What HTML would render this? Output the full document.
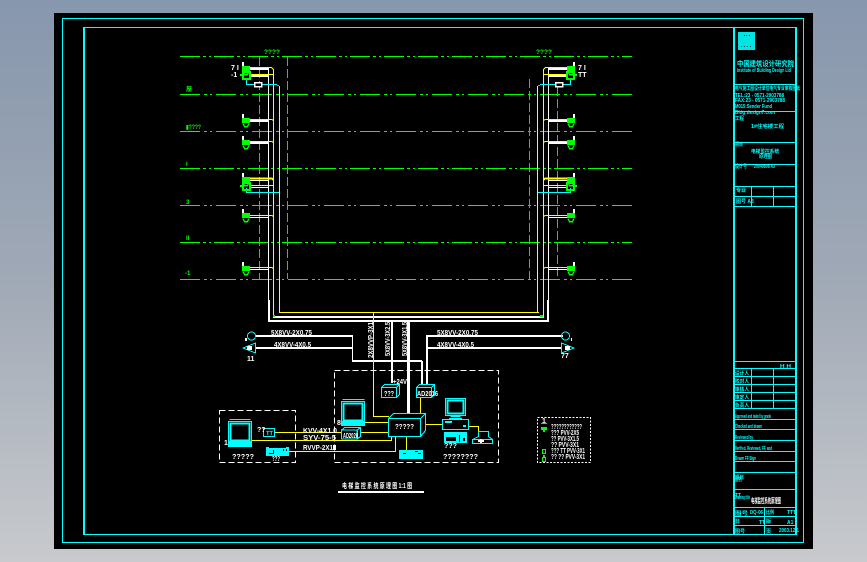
<!DOCTYPE html>
<html><head><meta charset="utf-8"><title>CAD drawing</title>
<style>
html,body{margin:0;padding:0;width:867px;height:562px;overflow:hidden;background:#a0a8b4}
svg{display:block;position:absolute;left:0;top:0}
text{font-family:"Liberation Sans","Noto Sans CJK SC",sans-serif;font-weight:700}
.w{fill:#fff;font-size:7px}
.g{fill:#00ff00;font-size:6px}
.c{fill:#00ffff;font-size:5px}
.c6{fill:#00ffff;font-size:7px}
</style></head><body>
<svg width="867" height="562" viewBox="0 0 867 562" xmlns="http://www.w3.org/2000/svg" shape-rendering="crispEdges">
<defs>
<linearGradient id="bg" x1="0" y1="0" x2="0" y2="1"><stop offset="0" stop-color="#8797ad"/><stop offset=".5" stop-color="#a0a9b6"/><stop offset="1" stop-color="#c8cacd"/></linearGradient>
<g id="fa">
<rect x="-4" y="-2" width="8" height="5" fill="#00ff00"/>
<path d="M-3 3.500L-1.500 6.500H1.500L3 3.500" fill="none" stroke="#00ff00" stroke-width="1.500"/>
<rect x="-4" y="-6" width="2" height="4" fill="#fff"/>
</g>
<g id="fb">
<rect x="-3" y="-3" width="7" height="7" fill="none" stroke="#00ff00" stroke-width="2"/>
<rect x="-6" y="-1" width="4" height="2" fill="#00ff00"/>
</g>
<g id="box3d"><path d="M.5 3.500H15.500V13.500H.5ZM.5 3.500L3.500 .5H18.500V10.500L15.500 13.500M15.500 3.500L18.500 .5" fill="#000" stroke="#0ff" stroke-width="1.200"/></g>
</defs>
<rect width="867" height="562" fill="url(#bg)"/>
<rect x="54" y="13" width="759" height="536" fill="#000"/>
<!-- frames -->
<g fill="none" stroke="#0ff">
<rect x="62.500" y="18.500" width="741" height="524"/>
<path d="M84 27.500H796M84 534.500H796"/>
</g>
<g fill="#0ff"><rect x="83" y="27" width="2" height="508"/><rect x="733" y="27" width="2" height="508"/><rect x="795" y="27" width="2" height="508"/></g>
<!-- green axis lines -->
<g stroke="#00ff00" fill="none">
<path d="M180 56.500H632M180 168.500H632M180 242.500H632" stroke-dasharray="20 3 3 3 2 3"/>
<path d="M180 94.500H632M180 131.500H632M180 205.500H632M180 279.500H632" stroke-dasharray="20 4 3 3 2 4"/>
</g>
<!-- grey dashed axes -->
<g stroke="#8a8a8a" fill="none" stroke-dasharray="9 3">
<path d="M259.500 57V279M287.500 57V279M529.500 79V279M557.500 87V279"/>
</g>
<text class="g" x="264" y="54" textLength="16" lengthAdjust="spacingAndGlyphs">????</text>
<text class="g" x="536" y="54" textLength="16" lengthAdjust="spacingAndGlyphs">????</text>
<text class="g" x="186" y="91" font-size="5">屋</text>
<text class="g" x="186" y="129" textLength="15" lengthAdjust="spacingAndGlyphs">▮????</text>
<text class="g" x="186" y="166">I</text>
<text class="g" x="186" y="204">3</text>
<text class="g" x="186" y="240">II</text>
<text class="g" x="185" y="275">-1</text>
<text class="w" x="231" y="70" font-size="6">7 I</text>
<text class="w" x="231" y="77" font-size="6">-1</text>
<text class="w" x="578" y="70" font-size="6">7 I</text>
<text class="w" x="578" y="77" font-size="6">TT</text>
<!-- left half, mirrored for right half -->
<g id="half">
<g fill="#fff">
<rect x="249" y="68" width="19" height="2"/><rect x="249" y="75" width="19" height="2"/>
<rect x="249" y="120" width="19" height="2"/><rect x="249" y="142" width="19" height="2"/>
<rect x="249" y="180" width="19" height="1"/><rect x="249" y="187" width="19" height="1"/>
<rect x="249" y="217" width="19" height="1"/><rect x="249" y="269" width="19" height="1"/>
<rect x="268" y="68" width="1" height="235"/><rect x="268" y="300" width="2" height="21"/>
<rect x="268" y="320" width="281" height="2"/>
<rect x="273" y="316" width="271" height="2"/>
</g>
<g fill="none" stroke="#ff0">
<path d="M249 67.500H271.500L273.500 69.500V316M249 74.500H273.500M249 119.500H272L273.500 120.500M249 141.500H272L273.500 142.500M249 215.500H272L273.500 216.500M249 267.500H272L273.500 268.500M249 185.500H273.500"/>
<path d="M279.500 86V312.500"/>
<path d="M249 178.500H272L273.500 180" stroke-width="2"/>
</g>
<path d="M246.500 78V84.500H277M246.500 188V192.500H279" fill="none" stroke="#0ff"/>
<rect x="277" y="85" width="2" height="1" fill="#00ff00"/>
<rect x="254.500" y="82.500" width="7" height="4" fill="#000" stroke="#fff" stroke-width="1.500"/>
<use href="#fa" x="246" y="68"/><use href="#fb" x="246" y="75"/>
<use href="#fa" x="246" y="120"/><use href="#fa" x="246" y="142"/>
<use href="#fa" x="246" y="179"/><use href="#fb" x="246" y="186"/>
<use href="#fa" x="246" y="215"/><use href="#fa" x="246" y="268"/>
</g>
<use href="#half" transform="translate(817 0) scale(-1 1)"/>
<rect x="279" y="312" width="260" height="1" fill="#ff0"/>
<rect x="273" y="315" width="2" height="2" fill="#00ff00"/><rect x="540" y="315" width="3" height="2" fill="#00ff00"/>
<!-- white buses -->
<g fill="#fff">
<rect x="255" y="335" width="98" height="2"/><rect x="255" y="347" width="98" height="2"/>
<rect x="352" y="336" width="1" height="26"/><rect x="352" y="360" width="70" height="2"/>
<rect x="421" y="361" width="2" height="25"/>
<rect x="426" y="335" width="2" height="51"/><rect x="427" y="335" width="136" height="2"/>
<rect x="428" y="347" width="135" height="2"/>
<rect x="391" y="322" width="2" height="61"/><rect x="407" y="322" width="3" height="91"/>
</g>
<text class="w" x="271" y="335" textLength="41" lengthAdjust="spacingAndGlyphs">5X8VV-2X0.75</text>
<text class="w" x="274" y="347" textLength="37" lengthAdjust="spacingAndGlyphs">4X8VV-4X0.5</text>
<text class="w" x="437" y="335" textLength="41" lengthAdjust="spacingAndGlyphs">5X8VV-2X0.75</text>
<text class="w" x="437" y="347" textLength="37" lengthAdjust="spacingAndGlyphs">4X8VV-4X0.5</text>
<text class="w" transform="translate(373 358) rotate(-90)" textLength="36" lengthAdjust="spacingAndGlyphs">2X8VVP-3X1</text>
<text class="w" transform="translate(390 356) rotate(-90)" textLength="34" lengthAdjust="spacingAndGlyphs">5X8VV-3X2.5</text>
<text class="w" transform="translate(407 356) rotate(-90)" textLength="34" lengthAdjust="spacingAndGlyphs">5X8VV-3X1.5</text>
<!-- speakers -->
<g fill="none" stroke="#0ff">
<circle cx="251.500" cy="336" r="4"/><path d="M255.500 343V353L243 348Z" fill="#000"/>
<circle cx="565.500" cy="336" r="4"/><path d="M561.500 343V353L574 348Z" fill="#000"/>
</g>
<g fill="#fff"><rect x="247" y="346" width="5" height="4"/><rect x="565" y="346" width="5" height="4"/><rect x="245" y="338" width="2" height="3"/><rect x="571" y="338" width="1" height="3"/></g>
<text class="w" x="247" y="361" font-size="6">11</text><text class="w" x="561" y="358" font-size="6">77</text>
<!-- dashed boxes -->
<g fill="none" stroke="#fff" stroke-dasharray="6 3">
<rect x="334.500" y="370.500" width="164" height="92"/>
<rect x="219.500" y="410.500" width="76" height="52"/>
</g>
<rect x="537.500" y="417.500" width="53" height="45" fill="none" stroke="#fff" stroke-dasharray="2 1.500"/>
<!-- yellow wiring -->
<g fill="none" stroke="#ff0">
<path d="M373.500 313V416.500H389M365 422.500H388M275 432.500H388M252 440.500H391.500V436M289 451.500H395.500V436M406.500 436V450M420.500 396V413M425 424.500H442M469 426.500H478.500V431"/>
</g>
<!-- left console -->
<g fill="none" stroke="#0ff">
<path d="M229.500 419.500H250.500"/><rect x="228.500" y="421.500" width="23" height="25"/><rect x="230.500" y="423.500" width="19" height="17" stroke-width="2"/>
<rect x="263.500" y="428.500" width="11" height="8" stroke-width="1.200"/>
</g>
<rect x="228" y="441" width="24" height="6" fill="#0ff"/>
<path d="M266 447H269V448H286V447H289V456H266Z" fill="#0ff"/>
<path d="M273 450H274V454H269V453H273ZM283 449H284V451H283ZM286 449H287V451H286Z" fill="#000"/>
<text class="c" x="266" y="435" fill="#0ff" textLength="7" lengthAdjust="spacingAndGlyphs">TT</text>
<text class="w" x="257" y="432" font-size="5">??</text>
<text class="w" x="224" y="445" font-size="6">1</text>
<text class="w" x="232" y="459" font-size="6" textLength="22" lengthAdjust="spacingAndGlyphs">?????</text>
<text class="w" x="272" y="461" font-size="5" textLength="8" lengthAdjust="spacingAndGlyphs">???</text>
<text class="w" x="303" y="433" textLength="34" lengthAdjust="spacingAndGlyphs">KVV-4X1.0</text>
<text class="w" x="303" y="440" textLength="33" lengthAdjust="spacingAndGlyphs">SYV-75-5</text>
<text class="w" x="303" y="450" textLength="30" lengthAdjust="spacingAndGlyphs">RVVP-2X1</text>
<rect x="333" y="445" width="3" height="5" fill="#fff"/>
<!-- main console -->
<g fill="none" stroke="#0ff">
<path d="M342.500 399.500H364.500"/><rect x="341.500" y="401.500" width="23" height="24"/><rect x="343.500" y="403.500" width="19" height="17" stroke-width="2"/>
</g>
<rect x="342" y="421" width="23" height="5" fill="#0ff"/>
<text class="w" x="337" y="425" font-size="6">8</text>
<use href="#box3d" transform="translate(341 427) scale(1.050 .9)"/>
<text class="w" x="343" y="438" textLength="15" lengthAdjust="spacingAndGlyphs">AD2020</text>
<use href="#box3d" transform="translate(381 384)"/>
<text class="w" x="384" y="396" textLength="10" lengthAdjust="spacingAndGlyphs">???</text>
<text class="w" x="393" y="384" textLength="14" lengthAdjust="spacingAndGlyphs">+24V</text>
<use href="#box3d" transform="translate(416 384)"/>
<text class="w" x="417" y="396" textLength="21" lengthAdjust="spacingAndGlyphs">AD2016</text>
<path d="M388.500 418.500H420.500V436.500H388.500ZM388.500 418.500L393.500 413.500H425.500V430.500L420.500 436.500M420.500 418.500L425.500 413.500" fill="#000" stroke="#0ff" stroke-width="1.200"/>
<text class="w" x="395" y="429" textLength="19" lengthAdjust="spacingAndGlyphs">?????</text>
<rect x="399" y="450" width="24" height="9" fill="#0ff"/>
<g fill="#000"><rect x="403" y="453" width="3" height="1"/><rect x="415" y="451" width="3" height="1"/><rect x="418" y="453" width="3" height="1"/></g>
<!-- right PC -->
<g fill="none" stroke="#0ff">
<rect x="445.500" y="398.500" width="20" height="17"/><rect x="447.500" y="400.500" width="16" height="13" stroke-width="2"/>
<path d="M450.500 416.500H460.500M449 418.500H462"/>
<rect x="442.500" y="419.500" width="26" height="10" stroke-width="1.200"/>
<path d="M472.500 439.500H492.500V443.500H472.500ZM472.500 439.500L478.500 436.500V431.500H488.500V436.500L492.500 439.500"/>
</g>
<rect x="445" y="421" width="7" height="2" fill="#0ff"/><rect x="463" y="425" width="3" height="2" fill="#0ff"/>
<rect x="444" y="432" width="23" height="11" fill="#0ff"/>
<g fill="#000"><rect x="446" y="437" width="10" height="4"/><rect x="459" y="435" width="1" height="7"/><rect x="463" y="438" width="2" height="3"/></g>
<rect x="478" y="440" width="6" height="2" fill="#fff"/><rect x="480" y="439" width="2" height="4" fill="#fff"/>
<text class="w" x="444" y="448" font-size="5" textLength="13" lengthAdjust="spacingAndGlyphs">???</text>
<text class="w" x="443" y="459" font-size="6" textLength="35" lengthAdjust="spacingAndGlyphs">????????</text>
<!-- legend -->
<rect x="541" y="423" width="6" height="1" fill="#00ff00"/>
<text class="w" x="542" y="423" font-size="5">1</text>
<path d="M541 427H547V430H545V432H543V430H541Z" fill="#00ff00"/>
<rect x="542.500" y="449.500" width="3" height="4" fill="none" stroke="#00ff00"/>
<rect x="542.500" y="457.500" width="3" height="4" fill="none" stroke="#00ff00"/><rect x="543" y="455" width="2" height="2" fill="#00ff00"/>
<text class="w" x="551" y="429" font-size="5" textLength="31" lengthAdjust="spacingAndGlyphs">????????????</text>
<text class="w" x="551" y="435" font-size="5" textLength="28" lengthAdjust="spacingAndGlyphs">??? PVV-2X5</text>
<text class="w" x="551" y="441" font-size="5" textLength="28" lengthAdjust="spacingAndGlyphs">?? PVV-3X1.5</text>
<text class="w" x="551" y="447" font-size="5" textLength="28" lengthAdjust="spacingAndGlyphs">?? PVV-3X1</text>
<text class="w" x="551" y="453" font-size="5" textLength="34" lengthAdjust="spacingAndGlyphs">??? TT PVV-3X1</text>
<text class="w" x="551" y="459" font-size="5" textLength="34" lengthAdjust="spacingAndGlyphs">?? ?? PVV-3X1</text>
<!-- title -->
<text class="w" x="342" y="488" font-size="6" textLength="70" lengthAdjust="spacingAndGlyphs">电 梯 监 控 系 统 原 理 图 1:1 图</text>
<rect x="338" y="491" width="86" height="2" fill="#fff"/>
<!-- title block -->
<rect x="738" y="32" width="17" height="18" fill="#00e4e4"/>
<g fill="#045"><rect x="744" y="35" width="1" height="1"/><rect x="746" y="35" width="1" height="1"/><rect x="749" y="35" width="1" height="1"/><rect x="741" y="46" width="1" height="1"/><rect x="744" y="46" width="1" height="1"/><rect x="747" y="46" width="1" height="1"/><rect x="750" y="46" width="1" height="1"/></g>
<g fill="#0ff">
<rect x="735" y="84" width="61" height="1"/><rect x="735" y="111" width="61" height="1"/><rect x="735" y="142" width="61" height="1"/>
<rect x="735" y="164" width="61" height="1"/><rect x="735" y="186" width="61" height="1"/><rect x="735" y="196" width="61" height="1"/><rect x="735" y="206" width="61" height="1"/>
<rect x="751" y="186" width="1" height="20"/><rect x="773" y="186" width="1" height="20"/>
<rect x="735" y="361" width="61" height="1"/><rect x="735" y="368" width="61" height="1"/><rect x="735" y="376" width="61" height="1"/>
<rect x="735" y="384" width="61" height="1"/><rect x="735" y="392" width="61" height="1"/><rect x="735" y="400" width="61" height="1"/>
<rect x="735" y="408" width="61" height="1"/><rect x="735" y="419" width="61" height="1"/><rect x="735" y="429" width="61" height="1"/>
<rect x="735" y="440" width="61" height="1"/><rect x="735" y="451" width="61" height="1"/><rect x="735" y="461" width="61" height="1"/>
<rect x="735" y="472" width="61" height="1"/><rect x="735" y="489" width="61" height="1"/><rect x="735" y="507" width="61" height="1"/>
<rect x="735" y="516" width="61" height="1"/><rect x="735" y="525" width="61" height="1"/>
<rect x="751" y="368" width="1" height="40"/><rect x="773" y="368" width="1" height="40"/>
<rect x="764" y="507" width="1" height="27"/>
</g>
<text class="c6" x="737" y="66" textLength="57" lengthAdjust="spacingAndGlyphs">中国建筑设计研究院</text>
<text class="c" x="737" y="72" font-size="4" textLength="54" lengthAdjust="spacingAndGlyphs">Institute of Building Design Ltd</text>
<text class="c" x="735" y="90" textLength="65" lengthAdjust="spacingAndGlyphs">电气施工图设计单位电气专业审核图纸</text>
<text class="c" x="735" y="97" font-size="5.500" textLength="49" lengthAdjust="spacingAndGlyphs">TEL:23 - 0571-2903788</text>
<text class="c" x="735" y="102" font-size="5.500" textLength="50" lengthAdjust="spacingAndGlyphs">FAX:23 - 0571-2903788</text>
<text class="c" x="735" y="108" font-size="5" textLength="37" lengthAdjust="spacingAndGlyphs">M015:Sender Fund</text>
<text class="c" x="735" y="114" font-size="5" textLength="40" lengthAdjust="spacingAndGlyphs">Bldg:design7.com</text>
<text class="c" x="735" y="120" font-size="5" textLength="9" lengthAdjust="spacingAndGlyphs">工程</text>
<text class="c" x="751" y="128" font-size="6" textLength="33" lengthAdjust="spacingAndGlyphs">1#住宅楼工程</text>
<text class="c" x="735" y="146" font-size="5" textLength="8" lengthAdjust="spacingAndGlyphs">项目</text>
<text class="c" x="751" y="153" font-size="6" textLength="28" lengthAdjust="spacingAndGlyphs">电梯监控系统</text>
<text class="c" x="759" y="158" font-size="5" textLength="13" lengthAdjust="spacingAndGlyphs">原理图</text>
<text class="c" x="735" y="168" font-size="5" textLength="12" lengthAdjust="spacingAndGlyphs">设计号</text>
<text class="c" x="754" y="168" font-size="4" textLength="21" lengthAdjust="spacingAndGlyphs">20040808 A3</text>
<text class="c" x="736" y="192" font-size="5">专业</text><text class="c" x="736" y="203" font-size="5">图号 A3</text>
<text class="c" x="780" y="368" font-size="5" textLength="11" lengthAdjust="spacingAndGlyphs">H H</text>
<text class="c" x="735" y="375" font-size="5" textLength="14" lengthAdjust="spacingAndGlyphs">设计人</text>
<text class="c" x="735" y="383" font-size="5" textLength="14" lengthAdjust="spacingAndGlyphs">校对人</text>
<text class="c" x="735" y="391" font-size="5" textLength="14" lengthAdjust="spacingAndGlyphs">审核人</text>
<text class="c" x="735" y="399" font-size="5" textLength="14" lengthAdjust="spacingAndGlyphs">审定人</text>
<text class="c" x="735" y="407" font-size="5" textLength="14" lengthAdjust="spacingAndGlyphs">负责人</text>
<text class="c" x="735" y="418" font-size="4.500" textLength="36" lengthAdjust="spacingAndGlyphs">Approved and dated by grade</text>
<text class="c" x="735" y="428" font-size="4.500" textLength="27" lengthAdjust="spacingAndGlyphs">Checked and drawn</text>
<text class="c" x="735" y="439" font-size="4.500" textLength="18" lengthAdjust="spacingAndGlyphs">Reviewed by</text>
<text class="c" x="735" y="450" font-size="4.500" textLength="37" lengthAdjust="spacingAndGlyphs">Verified, Reviewed, FF, and</text>
<text class="c" x="735" y="460" font-size="4.500" textLength="21" lengthAdjust="spacingAndGlyphs">Drawn FF Sign</text>
<text class="c" x="735" y="479" font-size="4.500" textLength="9" lengthAdjust="spacingAndGlyphs">项目</text>
<text class="c" x="735" y="481" font-size="4" textLength="7" lengthAdjust="spacingAndGlyphs">图名</text>
<text class="c" x="735" y="497" font-size="5">TT</text>
<text class="c" x="735" y="499" font-size="4" textLength="15" lengthAdjust="spacingAndGlyphs">Drawing title</text>
<text class="w" x="751" y="503" font-size="5" textLength="30" lengthAdjust="spacingAndGlyphs">电梯监控系统原理图</text>
<text class="c" x="735" y="515" font-size="5" textLength="13" lengthAdjust="spacingAndGlyphs">图号</text>
<text class="c" x="750" y="514" font-size="5" textLength="13" lengthAdjust="spacingAndGlyphs">DQ-06</text>
<text class="c" x="766" y="514" font-size="5" textLength="8" lengthAdjust="spacingAndGlyphs">比例</text>
<text class="c" x="787" y="514" font-size="5">TTT</text>
<text class="c" x="735" y="523" font-size="5" textLength="5" lengthAdjust="spacingAndGlyphs">日</text>
<text class="c" x="759" y="524" font-size="5">TT</text><text class="c" x="766" y="523" font-size="5">版</text>
<text class="c" x="787" y="524" font-size="5">A1</text>
<text class="c" x="735" y="533" font-size="5">图号</text><text class="c" x="766" y="533" font-size="5">页</text>
<text class="c" x="779" y="532" font-size="5" textLength="20" lengthAdjust="spacingAndGlyphs">2003.12 1</text>
</svg>
</body></html>
